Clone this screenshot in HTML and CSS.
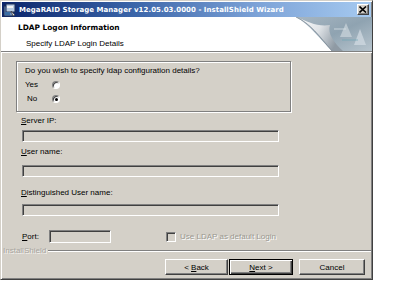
FILE: index.html
```html
<!DOCTYPE html>
<html>
<head>
<meta charset="utf-8">
<link rel="stylesheet" href="styles.css">
</head>
<body>
<div class="window">
  <div class="titlebar">
    <svg class="appicon" width="14" height="14" viewBox="0 0 14 14">
      <rect x="1" y="3" width="9" height="10" fill="#6f8fb8" stroke="#1d2d55" stroke-width="1"/>
      <rect x="3" y="1" width="9" height="8" fill="#b9cbe0" stroke="#1d2d55" stroke-width="1"/>
      <rect x="4" y="3" width="6" height="2" fill="#f2f2f2"/>
      <rect x="2" y="9" width="5" height="3" fill="#3a6ea5"/>
      <path d="M8 8 L12 12 L10 13 Z" fill="#e8e8e8" stroke="#333" stroke-width="0.6"/>
    </svg>
    <span class="title">MegaRAID Storage Manager v12.05.03.0000 - InstallShield Wizard</span>
    <span class="close">
      <svg width="8" height="7" viewBox="0 0 8 7"><path d="M0.5 0.5 L7 6.5 M7 0.5 L0.5 6.5" stroke="#000" stroke-width="1.6"/></svg>
    </span>
  </div>
  <div class="header">
    <div class="htext">
      <div class="htitle">LDAP Logon Information</div>
      <div class="hsub">Specify LDAP Login Details</div>
    </div>
    <svg class="curl" width="76" height="34" viewBox="0 0 76 34">
      <defs>
        <linearGradient id="bg" x1="0" y1="0" x2="1" y2="1">
          <stop offset="0" stop-color="#a7b6c2"/>
          <stop offset="0.5" stop-color="#8fa3b1"/>
          <stop offset="1" stop-color="#b8c5ce"/>
        </linearGradient>
        <linearGradient id="pg" x1="0" y1="0" x2="1" y2="0.4">
          <stop offset="0" stop-color="#ffffff"/>
          <stop offset="0.55" stop-color="#dfe3e7"/>
          <stop offset="1" stop-color="#8f9aa4"/>
        </linearGradient>
      </defs>
      <path d="M0 0 L76 0 L76 34 L36 34 C 24 22, 14 8, 0 0 Z" fill="url(#bg)"/>
      <path d="M0 0 C 14 6, 24 20, 36 34 L 47 34 C 38 26, 31 16, 34 8 C 22 10, 12 5, 0 0 Z" fill="url(#pg)"/>
      <path d="M0 0 C 14 6, 24 20, 36 34" fill="none" stroke="#7d8a95" stroke-width="0.8"/>
      <path d="M50 6 L56 20 L44 20 Z" fill="#c8d3da" opacity="0.75"/>
      <path d="M64 12 L70 28 L58 28 Z" fill="#d0dae1" opacity="0.75"/>
      <path d="M46 23 L62 23" stroke="#6fa6b5" stroke-width="1" opacity="0.7"/>
      <path d="M38 12 L50 12" stroke="#d8e2e8" stroke-width="1" opacity="0.8"/>
    </svg>
  </div>
  <div class="sep"></div>
  <div class="content">
    <div class="group">
      <div class="q">Do you wish to specify ldap configuration details?</div>
      <div class="opt"><span class="optlabel">Yes</span><span class="radio"></span></div>
      <div class="opt"><span class="optlabel no">No</span><span class="radio checked"></span></div>
    </div>
    <div class="lbl l1"><u>S</u>erver IP:</div>
    <div class="field f1"></div>
    <div class="lbl l2"><u>U</u>ser name:</div>
    <div class="field f2"></div>
    <div class="lbl l3"><u>D</u>istinguished User name:</div>
    <div class="field f3"></div>
    <div class="portrow">
      <span class="plbl"><u>P</u>ort:</span>
      <span class="field port"></span>
      <span class="check"></span>
      <span class="dis">Use LDAP as default Login</span>
    </div>
  </div>
  <div class="brand"><span class="brandtext">InstallShield</span><span class="bline"></span></div>
  <div class="buttons">
    <span class="btn back">&lt;&nbsp;<u>B</u>ack</span>
    <span class="btn next"><u>N</u>ext &gt;</span>
    <span class="btn cancel">Cancel</span>
  </div>
</div>
</body>
</html>
```

FILE: styles.css
```css
html, body {
  margin: 0;
  padding: 0;
}
body {
  width: 400px;
  height: 282px;
  background: #ffffff;
  overflow: hidden;
  font-family: "Liberation Sans", Arial, sans-serif;
  font-size: 8px;
  color: #000;
}
.window {
  width: 373px;
  height: 280px;
  box-sizing: border-box;
  background: #d4d0c8;
  border: 1px solid;
  border-color: #d4d0c8 #404040 #404040 #d4d0c8;
  box-shadow: inset 1px 1px 0 #ffffff, inset -1px -1px 0 #808080;
  padding: 1px;
  display: flex;
  flex-direction: column;
}
.titlebar {
  height: 15px;
  flex: none;
  display: flex;
  align-items: center;
  background: linear-gradient(to right, #0a246a 0%, #3a64a8 35%, #7ea4d8 70%, #a6caf0 100%);
  padding-left: 1px;
}
.appicon {
  flex: none;
  margin-right: 2px;
}
.title {
  color: #fff;
  font-family: "DejaVu Sans", sans-serif;
  font-weight: bold;
  font-size: 7px;
  white-space: nowrap;
  letter-spacing: 0.05px;
}
.close {
  margin-left: auto;
  margin-right: 2px;
  width: 12px;
  height: 11px;
  box-sizing: border-box;
  background: #d4d0c8;
  border: 1px solid;
  border-color: #fff #404040 #404040 #fff;
  box-shadow: inset -1px -1px 0 #808080;
  display: flex;
  align-items: center;
  justify-content: center;
}
.close svg { display: block; }
.header {
  height: 34px;
  flex: none;
  background: #fff;
  display: flex;
  justify-content: space-between;
  margin-left: -1px;
  margin-right: -1px;
}
.htext {
  padding-left: 17px;
  padding-top: 6px;
}
.htitle {
  font-family: "DejaVu Sans", sans-serif;
  font-weight: bold;
  font-size: 7.4px;
  line-height: 10px;
}
.hsub {
  margin-top: 6px;
  padding-left: 8px;
  font-size: 8px;
  line-height: 10px;
}
.curl {
  flex: none;
  display: block;
}
.sep {
  height: 1px;
  flex: none;
  background: #808080;
  border-bottom: 1px solid #fff;
  margin-left: -1px;
  margin-right: -1px;
}
.content {
  padding-left: 14px;
  display: flex;
  flex-direction: column;
  align-items: flex-start;
}
.group {
  margin-top: 8px;
  width: 265px;
  height: 49px;
  border: 1px solid #808080;
  box-shadow: 1px 1px 0 #fff, inset 1px 1px 0 #fff;
  padding-left: 8px;
  box-sizing: content-box;
}
.q {
  margin-top: 4px;
  line-height: 10px;
  white-space: nowrap;
}
.opt {
  display: flex;
  align-items: center;
  height: 10px;
  margin-top: 4px;
}
.optlabel {
  width: 27px;
  line-height: 10px;
}
.optlabel.no { padding-left: 2px; width: 25px; }
.radio {
  width: 8px;
  height: 8px;
  box-sizing: border-box;
  border-radius: 50%;
  background: #fff;
  border: 1px solid;
  border-color: #808080 #fff #fff #808080;
  box-shadow: inset 1px 1px 0 #404040;
  position: relative;
}
.radio.checked::after {
  content: "";
  position: absolute;
  left: 2px;
  top: 2px;
  width: 3px;
  height: 3px;
  border-radius: 50%;
  background: #000;
}
.lbl {
  line-height: 10px;
  padding-left: 5px;
}
.l1 { margin-top: 4px; }
.l2 { margin-top: 5px; }
.l3 { margin-top: 11px; }
.field {
  width: 257px;
  height: 12px;
  box-sizing: border-box;
  margin-left: 6px;
  background: #d4d0c8;
  border: 1px solid;
  border-color: #808080 #fff #fff #808080;
  box-shadow: inset 1px 1px 0 #404040;
}
.f1 { margin-top: 4px; }
.f2 { margin-top: 8px; }
.f3 { margin-top: 6px; }
.portrow {
  margin-top: 14px;
  display: flex;
  align-items: center;
  height: 13px;
  padding-left: 6px;
}
.plbl {
  width: 27px;
  line-height: 10px;
}
.field.port {
  width: 62px;
  height: 13px;
  margin-left: 0;
  display: block;
}
.check {
  margin-left: 55px;
  width: 10px;
  height: 10px;
  box-sizing: border-box;
  background: #d4d0c8;
  border: 1px solid;
  border-color: #808080 #fff #fff #808080;
  box-shadow: inset 1px 1px 0 #404040;
}
.dis {
  margin-left: 4px;
  color: #9a9890;
  text-shadow: 1px 1px 0 #fff;
  white-space: nowrap;
}
.brand {
  margin-top: 3px;
  height: 10px;
  display: flex;
  align-items: center;
  padding-left: 1px;
}
.brandtext {
  color: #a8a59e;
  text-shadow: 1px 1px 0 #f4f3f0;
  line-height: 10px;
}
.bline {
  flex: 1;
  height: 1px;
  margin-left: 2px;
  background: #808080;
  border-bottom: 1px solid #fff;
}
.buttons {
  margin-top: 3px;
  display: flex;
  padding-left: 163px;
}
.btn {
  height: 16px;
  box-sizing: border-box;
  display: flex;
  align-items: center;
  justify-content: center;
  background: #d4d0c8;
  border: 1px solid;
  border-color: #fff #404040 #404040 #fff;
  box-shadow: inset -1px -1px 0 #808080;
}
.back { width: 63px; }
.next {
  width: 64px;
  margin-left: 1px;
  border-color: #000;
  box-shadow: inset 1px 1px 0 #fff, inset -1px -1px 0 #404040, inset -2px -2px 0 #808080;
}
.cancel { width: 66px; margin-left: 6px; }
```
